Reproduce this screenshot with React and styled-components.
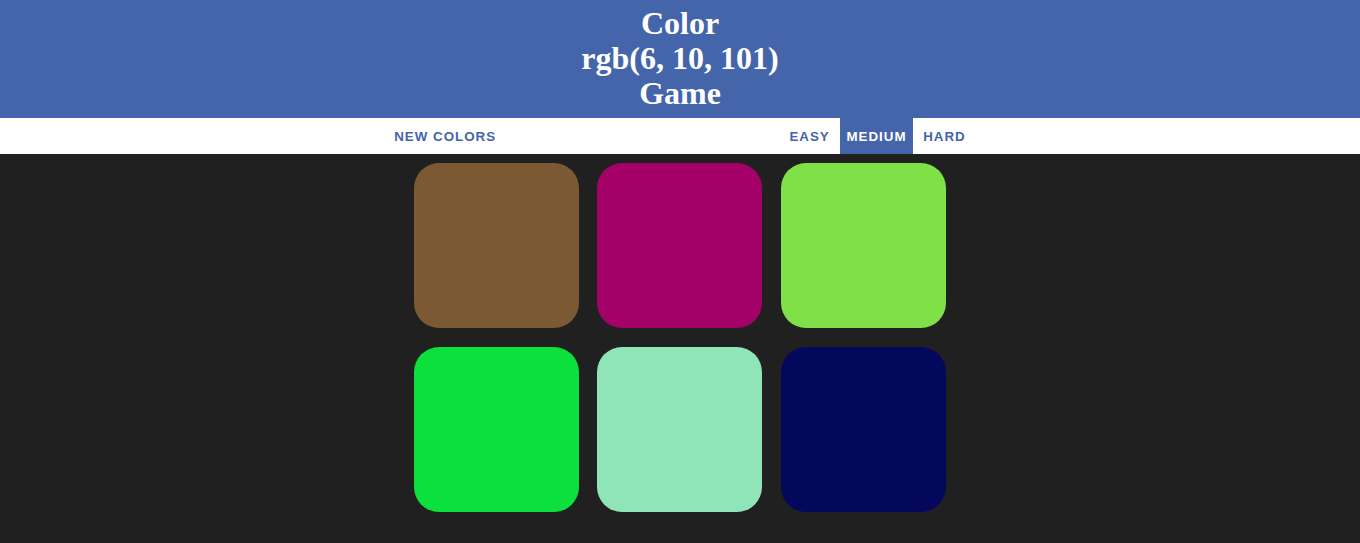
import React, { useState } from 'react';
import styled, { createGlobalStyle } from 'styled-components';

const GlobalStyle = createGlobalStyle`
  body {
    margin: 0;
    background-color: #202020;
    font-family: "Liberation Sans", Arial, sans-serif;
  }
`;

const Title = styled.h1`
  margin: 0;
  padding: 6px 0;
  text-align: center;
  background-color: #4465a9;
  color: #fff;
  font-family: "Liberation Serif", "Times New Roman", serif;
  font-size: 32px;
  font-weight: 700;
  line-height: 1.1;
`;

const Line = styled.span`
  display: block;
`;

const Stripe = styled.div`
  height: 36px;
  text-align: center;
  background-color: #fff;
  font-size: 13.333px;
  letter-spacing: 1px;
`;

const Message = styled.span`
  display: inline-block;
  width: 20%;
`;

const Button = styled.button`
  height: 100%;
  border: none;
  margin: 0;
  padding: 2px 6px 0;
  vertical-align: top;
  background: ${({ active }) => (active ? '#4465a9' : 'none')};
  color: ${({ active }) => (active ? '#fff' : '#4465a9')};
  font-family: "Liberation Sans", Arial, sans-serif;
  font-size: 13.333px;
  font-weight: 700;
  letter-spacing: 1px;
  text-transform: uppercase;
  cursor: pointer;
  outline: none;
`;

const Board = styled.div`
  box-sizing: border-box;
  display: grid;
  grid-template-columns: repeat(3, 165px);
  gap: 19px 18.26px;
  width: 550px;
  margin: 0 auto;
  padding: 9px 9.13px;
`;

const Square = styled.div`
  width: 165px;
  height: 165px;
  border-radius: 25px;
  background-color: ${({ color }) => color};
`;

const colors = [
  'rgb(123, 89, 50)',
  'rgb(163, 0, 104)',
  'rgb(128, 224, 72)',
  'rgb(12, 224, 60)',
  'rgb(143, 229, 184)',
  'rgb(4, 8, 92)',
];

const App = () => {
  const [mode, setMode] = useState('medium');

  return (
    <>
      <GlobalStyle />
      <Title>
        <Line>Color</Line>
        <Line>rgb(6, 10, 101)</Line>
        <Line>Game</Line>
      </Title>
      <Stripe>
        <Button>New Colors</Button>{' '}
        <Message />{' '}
        <Button active={mode === 'easy'} onClick={() => setMode('easy')}>Easy</Button>{' '}
        <Button active={mode === 'medium'} onClick={() => setMode('medium')}>Medium</Button>{' '}
        <Button active={mode === 'hard'} onClick={() => setMode('hard')}>Hard</Button>
      </Stripe>
      <Board>
        {colors.map((c) => (
          <Square key={c} color={c} />
        ))}
      </Board>
    </>
  );
};

export default App;
